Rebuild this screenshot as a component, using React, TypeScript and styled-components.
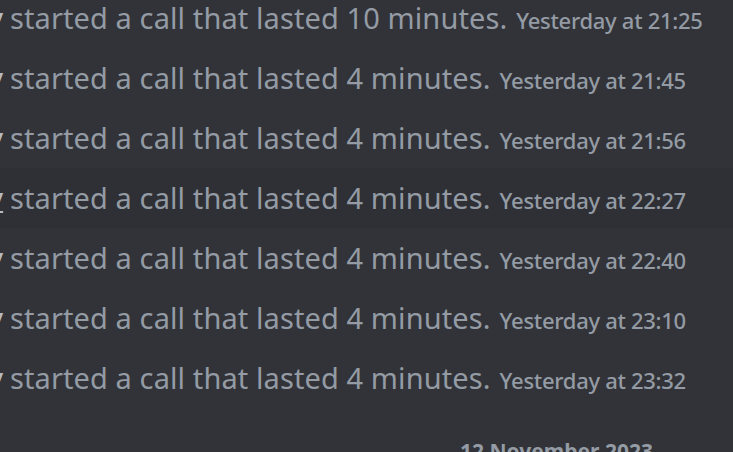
import styled, { createGlobalStyle } from "styled-components";

const GlobalStyle = createGlobalStyle`
  html, body {
    margin: 0;
    padding: 0;
    background: #313338;
    overflow: hidden;
  }
`;

const Chat = styled.div`
  width: 733px;
  height: 452px;
  overflow: hidden;
  background: #313338;
  font-family: "Noto Sans", "Open Sans", sans-serif;
`;

const List = styled.div`
  display: flex;
  flex-direction: column;
  margin-top: -12px;
  margin-left: -93px;
`;

const Row = styled.div<{ $hover?: boolean }>`
  display: flex;
  align-items: baseline;
  height: 60px;
  line-height: 60px;
  padding-right: 20px;
  background: ${(p) => (p.$hover ? "#2e3035" : "transparent")};
  white-space: nowrap;
`;

const Name = styled.span<{ $hover?: boolean }>`
  display: inline-block;
  width: 95px;
  text-align: right;
  font-size: 29px;
  font-weight: 500;
  color: #b5bac1;
  text-decoration: ${(p) => (p.$hover ? "underline" : "none")};
`;

const Text = styled.span`
  margin-left: 8px;
  font-size: 29px;
  font-weight: 400;
  color: #949ba4;
  letter-spacing: 0.1px;
`;

const Stamp = styled.span`
  margin-left: 9px;
  font-size: 22px;
  font-weight: 500;
  color: #949ba4;
  letter-spacing: -0.3px;
`;

const Divider = styled.div`
  display: flex;
  align-items: center;
  margin-top: 28px;
  padding-left: 460px;
  gap: 8px;
`;

const DividerText = styled.span`
  font-size: 21px;
  font-weight: 700;
  color: #949ba4;
  line-height: 30px;
`;

const calls = [
  { minutes: 10, time: "21:25" },
  { minutes: 4, time: "21:45" },
  { minutes: 4, time: "21:56" },
  { minutes: 4, time: "22:27", hover: true },
  { minutes: 4, time: "22:40" },
  { minutes: 4, time: "23:10" },
  { minutes: 4, time: "23:32" },
];

export default function App() {
  return (
    <Chat>
      <GlobalStyle />
      <List>
        {calls.map((c) => (
          <Row key={c.time} $hover={c.hover}>
            <Name $hover={c.hover}>Jeremy</Name>
            <Text>started a call that lasted {c.minutes} minutes.</Text>
            <Stamp>Yesterday at {c.time}</Stamp>
          </Row>
        ))}
      </List>
      <Divider>
        <DividerText>12 November 2023</DividerText>
      </Divider>
    </Chat>
  );
}
